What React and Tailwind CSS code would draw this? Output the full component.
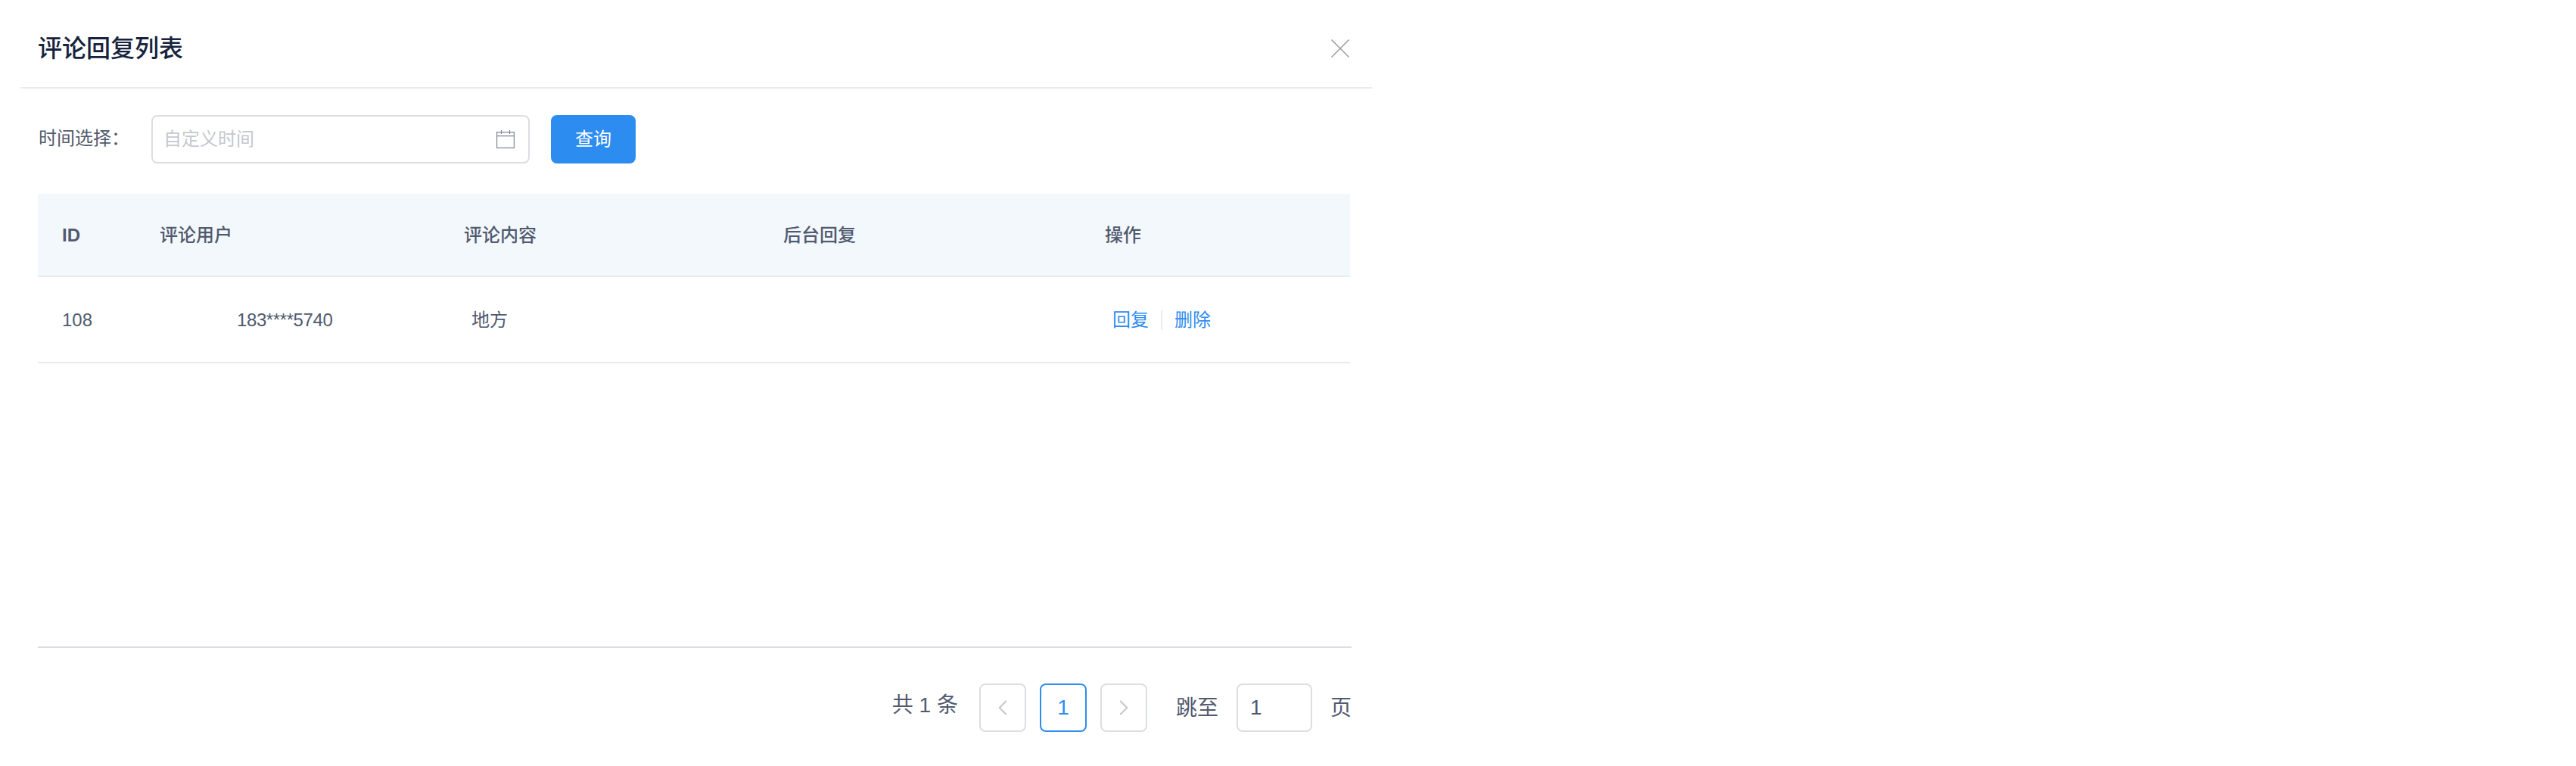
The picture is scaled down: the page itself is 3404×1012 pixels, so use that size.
import { ChevronLeft, ChevronRight } from "lucide-react";

const FONT = "font-['Liberation_Sans','Noto_Sans_CJK_SC',sans-serif]";

const columns = [
  { label: "ID", width: "w-[129px]", weight: "font-bold" },
  { label: "评论用户", width: "w-[402px]", weight: "font-medium" },
  { label: "评论内容", width: "w-[422px]", weight: "font-medium" },
  { label: "后台回复", width: "w-[425px]", weight: "font-medium" },
  { label: "操作", width: "w-[356px]", weight: "font-medium" },
];

function PageButton({ children, active }) {
  return (
    <div
      className={`flex h-16 w-[62px] items-center justify-center rounded-lg border-2 bg-white ${
        active ? "border-[#2d8cf0] text-[#2d8cf0]" : "border-[#dcdee2] text-[#c5c8ce]"
      }`}
    >
      {children}
    </div>
  );
}

export default function App() {
  return (
    <div className={`${FONT} h-[1012px] w-[3404px] bg-white text-[#515a6e]`}>
      <div className="ml-[27px] w-[1786px]">
        <div className="flex h-[117px] items-center justify-between border-b-2 border-[#e8eaec] pl-[23px] pr-[30px] pt-3">
          <h1 className="text-[32px] leading-[44px] font-medium text-[#17233d]">评论回复列表</h1>
          <svg width="24" height="24" viewBox="0 0 24 24" className="text-[#999]">
            <path d="M0.5 0.5 L23.5 23.5 M23.5 0.5 L0.5 23.5" stroke="currentColor" strokeWidth="1.5" fill="none" />
          </svg>
        </div>

        <div className="ml-6 mt-[35px] flex h-16 items-center">
          <span className="mb-[3px] w-[149px] text-2xl leading-8">时间选择：</span>
          <div className="flex h-16 w-[500px] items-center justify-between rounded-lg border-2 border-[#dcdee2] pl-[14px] pr-[18px]">
            <span className="text-2xl text-[#c5c8ce]">自定义时间</span>
            <svg width="24" height="24" viewBox="0 0 24 24" fill="none" stroke="#808695" strokeWidth="1.2">
              <path d="M0.6 2.6 H23.4 V23.4 H0.6 Z M0.6 7.6 H23.4 M6.5 0 V5 M17.5 0 V5" />
            </svg>
          </div>
          <button className="ml-7 h-16 w-28 rounded-lg bg-[#2d8cf0] text-2xl text-white">查询</button>
        </div>

        <div className="ml-[23px] mt-10 w-[1734px]">
          <div className="flex h-[110px] items-center border-b-2 border-[#e8eaec] bg-[#f3f8fd] pt-[2px]">
            {columns.map((col) => (
              <div key={col.label} className={`${col.width} ${col.weight} pl-8 text-2xl`}>
                {col.label}
              </div>
            ))}
          </div>
          <div className="flex h-[114px] items-center border-b-2 border-[#e8eaec] pt-[2px] text-2xl">
            <div className="w-[129px] pl-8">108</div>
            <div className="w-[403px] pl-[134px] tracking-[-0.4px]">183****5740</div>
            <div className="w-[421px] pl-[41px]">地方</div>
            <div className="w-[426px]" />
            <div className="flex w-[355px] items-center pl-[41px] text-[#2d8cf0]">
              <span>回复</span>
              <span className="ml-4 mr-4 h-[26px] w-[2px] bg-[#e8eaec]" />
              <span>删除</span>
            </div>
          </div>

          <div className="-mr-[2px] mt-[374px] flex h-[113px] items-start justify-end border-t-2 border-[#dcdee2] pt-[47px] text-[28px]">
            <span className="mr-7 mt-2">共 1 条</span>
            <PageButton>
              <ChevronLeft size={34} strokeWidth={1.5} />
            </PageButton>
            <div className="w-[18px]" />
            <PageButton active>1</PageButton>
            <div className="w-[18px]" />
            <PageButton>
              <ChevronRight size={34} strokeWidth={1.5} />
            </PageButton>
            <span className="ml-[38px] mr-6 mt-3">跳至</span>
            <div className="flex h-16 w-[100px] items-center rounded-lg border-2 border-[#dcdee2] pl-4">1</div>
            <span className="ml-6 mt-3">页</span>
          </div>
        </div>
      </div>
    </div>
  );
}
